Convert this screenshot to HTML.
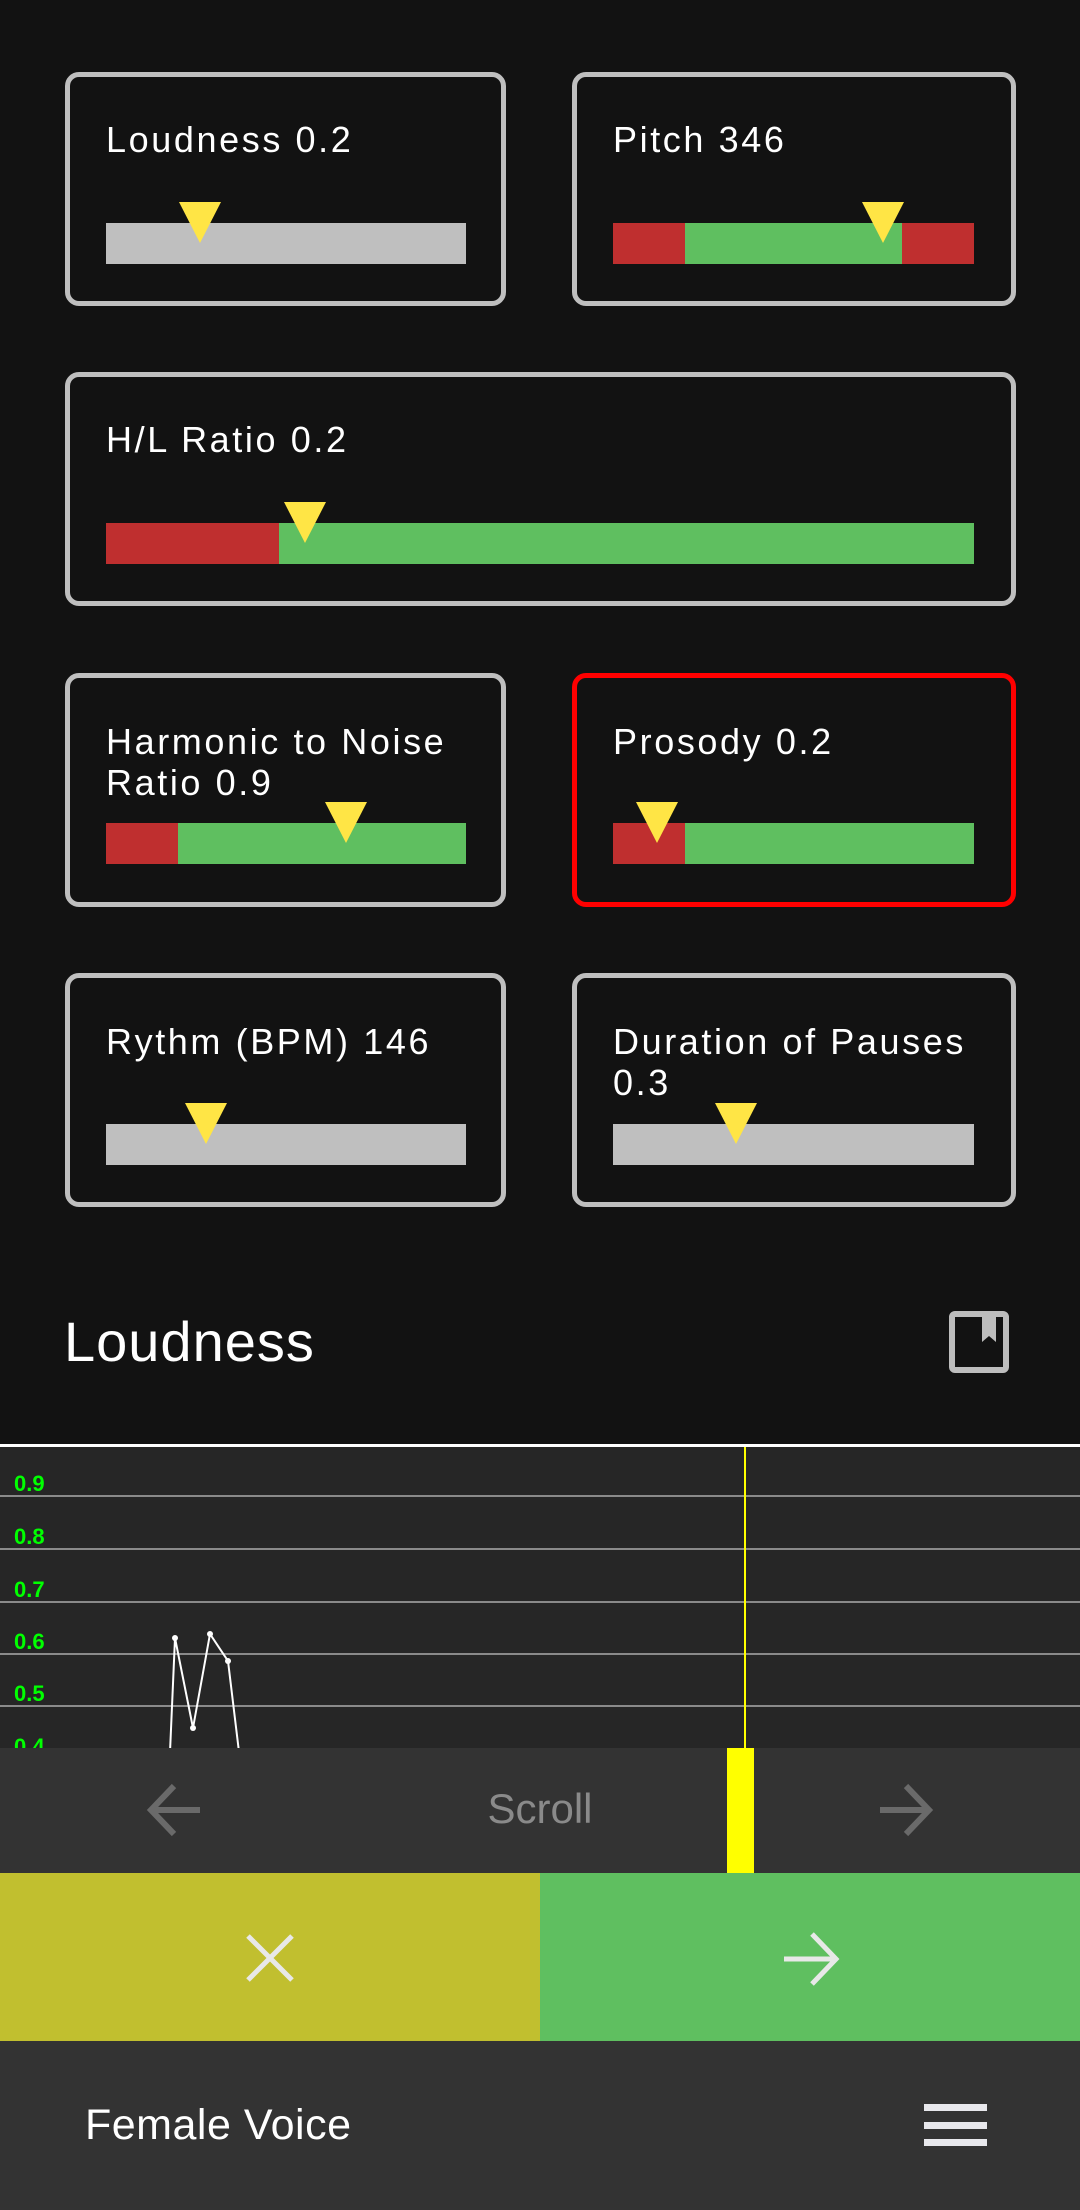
<!DOCTYPE html>
<html><head><meta charset="utf-8"><style>
*{margin:0;padding:0;box-sizing:border-box}
body{width:1080px;height:2210px;background:#121212;position:relative;overflow:hidden;font-family:"Liberation Sans",sans-serif;color:#fff}
.card{position:absolute;border:5px solid #bfbfbf;border-radius:14px}
.t{position:absolute;left:36px;font-size:36px;line-height:41px;letter-spacing:2.6px;color:#fff;white-space:nowrap}
.bar{position:absolute;height:41px;display:flex}
.tri{position:absolute;width:0;height:0;border-left:21px solid transparent;border-right:21px solid transparent;border-top:41px solid #ffe545}
.a{position:absolute}
</style></head><body>

<div class="card" style="left:65px;top:72px;width:441px;height:234px"><div class="t" style="top:42px">Loudness 0.2</div></div>
<div class="bar" style="left:106px;top:223px;width:360px;background:#bfbfbf"></div>
<div class="tri" style="left:179px;top:202px"></div>

<div class="card" style="left:572px;top:72px;width:444px;height:234px"><div class="t" style="top:42px">Pitch 346</div></div>
<div class="bar" style="left:613px;top:223px;width:361px"><div style="width:72px;background:#bf2f2f"></div><div style="width:217px;background:#5fbf60"></div><div style="flex:1;background:#bf2f2f"></div></div>
<div class="tri" style="left:862px;top:202px"></div>

<div class="card" style="left:65px;top:372px;width:951px;height:234px"><div class="t" style="top:42px">H/L Ratio 0.2</div></div>
<div class="bar" style="left:106px;top:523px;width:868px"><div style="width:173px;background:#bf2f2f"></div><div style="flex:1;background:#5fbf60"></div></div>
<div class="tri" style="left:284px;top:502px"></div>

<div class="card" style="left:65px;top:673px;width:441px;height:234px"><div class="t" style="top:43px">Harmonic to Noise<br>Ratio 0.9</div></div>
<div class="bar" style="left:106px;top:823px;width:360px"><div style="width:72px;background:#bf2f2f"></div><div style="flex:1;background:#5fbf60"></div></div>
<div class="tri" style="left:325px;top:802px"></div>

<div class="card" style="left:572px;top:673px;width:444px;height:234px;border-color:#ff0000"><div class="t" style="top:43px">Prosody 0.2</div></div>
<div class="bar" style="left:613px;top:823px;width:361px"><div style="width:72px;background:#bf2f2f"></div><div style="flex:1;background:#5fbf60"></div></div>
<div class="tri" style="left:636px;top:802px"></div>

<div class="card" style="left:65px;top:973px;width:441px;height:234px"><div class="t" style="top:43px">Rythm (BPM) 146</div></div>
<div class="bar" style="left:106px;top:1124px;width:360px;background:#bfbfbf"></div>
<div class="tri" style="left:185px;top:1103px"></div>

<div class="card" style="left:572px;top:973px;width:444px;height:234px"><div class="t" style="top:43px">Duration of Pauses<br>0.3</div></div>
<div class="bar" style="left:613px;top:1124px;width:361px;background:#bfbfbf"></div>
<div class="tri" style="left:715px;top:1103px"></div>

<div class="a" style="left:64px;top:1308px;font-size:56px;line-height:68px;letter-spacing:1px">Loudness</div>
<svg class="a" style="left:946px;top:1310px" width="66" height="64" viewBox="0 0 66 64">
<rect x="6" y="4" width="54" height="56" rx="3" fill="none" stroke="#bdbdbd" stroke-width="6"/>
<path d="M36 4 H50 V32 L43 26 L36 32 Z" fill="#bdbdbd"/>
</svg>

<div class="a" style="left:0;top:1444px;width:1080px;height:304px;background:#262626;border-top:3px solid #fff;overflow:hidden">
<svg width="1080" height="301" style="position:absolute;left:0;top:0">
<g stroke="#8a8a8a" stroke-width="2">
<line x1="0" y1="49" x2="1080" y2="49"/><line x1="0" y1="102" x2="1080" y2="102"/><line x1="0" y1="155" x2="1080" y2="155"/><line x1="0" y1="207" x2="1080" y2="207"/><line x1="0" y1="259" x2="1080" y2="259"/>
</g>
<g fill="#00ff00" font-family="Liberation Sans Narrow,Liberation Sans,sans-serif" font-weight="bold" font-size="22">
<text x="14" y="44">0.9</text><text x="14" y="97">0.8</text><text x="14" y="150">0.7</text><text x="14" y="202">0.6</text><text x="14" y="254">0.5</text><text x="14" y="307">0.4</text>
</g>
<polyline points="170,305 175,191 193,281 210,187 228,214 239,305" fill="none" stroke="#fff" stroke-width="2"/>
<g fill="#fff"><circle cx="175" cy="191" r="3"/><circle cx="193" cy="281" r="3"/><circle cx="210" cy="187" r="3"/><circle cx="228" cy="214" r="3"/></g>
<line x1="745" y1="0" x2="745" y2="301" stroke="#ffff00" stroke-width="2"/>
</svg>
</div>

<div class="a" style="left:0;top:1748px;width:1080px;height:125px;background:#333333"></div>
<div class="a" style="left:727px;top:1748px;width:27px;height:125px;background:#ffff00"></div>
<div class="a" style="left:0;top:1785px;width:1080px;text-align:center;font-size:42px;line-height:48px;color:#8a8a8a">Scroll</div>
<svg class="a" style="left:145px;top:1780px" width="60" height="60" viewBox="0 0 60 60"><path d="M55 30 H8 M29 6 L6 30 L29 54" fill="none" stroke="#6a6a6a" stroke-width="6"/></svg>
<svg class="a" style="left:875px;top:1780px" width="60" height="60" viewBox="0 0 60 60"><path d="M5 30 H52 M31 6 L54 30 L31 54" fill="none" stroke="#6a6a6a" stroke-width="6"/></svg>

<div class="a" style="left:0;top:1873px;width:540px;height:168px;background:#c1bf2f"></div>
<div class="a" style="left:540px;top:1873px;width:540px;height:168px;background:#5fbf60"></div>
<svg class="a" style="left:244px;top:1932px" width="52" height="52" viewBox="0 0 52 52"><path d="M4 4 L48 48 M48 4 L4 48" stroke="#e8e8e8" stroke-width="5"/></svg>
<svg class="a" style="left:782px;top:1930px" width="58" height="58" viewBox="0 0 58 58"><path d="M2 29 H52 M30 4 L54 29 L30 54" fill="none" stroke="#e8e8e8" stroke-width="5"/></svg>

<div class="a" style="left:0;top:2041px;width:1080px;height:169px;background:#333333"></div>
<div class="a" style="left:85px;top:2100px;font-size:43px;line-height:50px;letter-spacing:0.5px">Female Voice</div>
<div class="a" style="left:924px;top:2104px;width:63px;height:7px;background:#e8e8ec"></div>
<div class="a" style="left:924px;top:2122px;width:63px;height:7px;background:#e8e8ec"></div>
<div class="a" style="left:924px;top:2139px;width:63px;height:7px;background:#e8e8ec"></div>
</body></html>
